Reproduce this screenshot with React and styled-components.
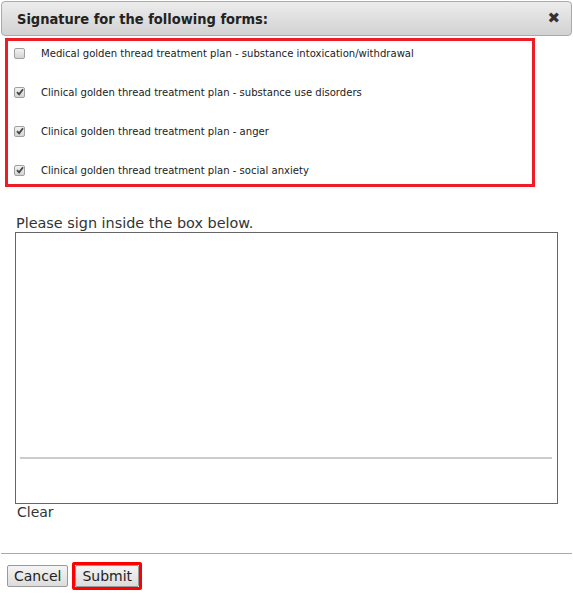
import styled, { createGlobalStyle } from "styled-components";

const GlobalStyle = createGlobalStyle`
  body {
    margin: 0;
    background: #fff;
    font-family: "DejaVu Sans", Verdana, sans-serif;
    color: #222;
  }
`;

const Dialog = styled.div`
  width: 573px;
  padding-top: 1px;
  box-sizing: border-box;
`;

const TitleBar = styled.div`
  box-sizing: border-box;
  margin: 0 1px;
  height: 35px;
  display: flex;
  align-items: center;
  justify-content: space-between;
  padding: 0 11px 0 15px;
  border: 1px solid #aaa;
  border-radius: 4px;
  background: linear-gradient(#ececec, #d2d2d2);
`;

const Title = styled.div`
  font-family: "DejaVu Sans Condensed", "DejaVu Sans", sans-serif;
  font-size: 14.5px;
  font-weight: bold;
  color: #222;
`;

const CloseButton = styled.span`
  font-size: 15px;
  font-weight: bold;
  color: #333;
  line-height: 1;
`;

const FormList = styled.div`
  box-sizing: border-box;
  margin: 2px 0 0 5px;
  width: 530px;
  height: 149px;
  border: 3px solid #ee1c24;
  padding: 2px 0 0 6px;
  display: flex;
  flex-direction: column;
  gap: 19px;
`;

const FormRow = styled.label`
  height: 20px;
  display: flex;
  align-items: center;
  font-family: "DejaVu Sans Condensed", "DejaVu Sans", sans-serif;
  font-size: 11.2px;
  color: #222;
`;

const Box = styled.span`
  box-sizing: border-box;
  width: 11px;
  height: 11px;
  margin-right: 16px;
  border: 1px solid #a0a0a0;
  border-radius: 2px;
  background: linear-gradient(#f2f2f2, #d4d4d4);
  display: flex;
  align-items: center;
  justify-content: center;
`;

const SignArea = styled.div`
  margin: 27px 0 0 15px;
`;

const Prompt = styled.div`
  font-size: 14.4px;
  color: #333;
  line-height: 18px;
  padding-left: 1px;
`;

const SignBox = styled.div`
  box-sizing: border-box;
  width: 543px;
  height: 272px;
  border: 1px solid #666;
  display: flex;
  flex-direction: column;
  justify-content: flex-end;
  padding: 0 5px 44px 4px;
`;

const SignLine = styled.div`
  height: 2px;
  background: #ccc;
`;

const ClearLink = styled.div`
  font-size: 14px;
  color: #333;
  padding-left: 2px;
  line-height: 17px;
`;

const Divider = styled.hr`
  margin: 32px 1px 0 1px;
  border: 0;
  border-top: 1px solid #aaa;
`;

const Actions = styled.div`
  display: flex;
  align-items: center;
  gap: 4px;
  padding: 8px 0 0 7px;
`;

const Button = styled.button`
  box-sizing: border-box;
  height: 22px;
  padding: 0 6px;
  font-family: "DejaVu Sans", Verdana, sans-serif;
  font-size: 14px;
  color: #222;
  border: 1px solid #999;
  border-radius: 2px;
  background: linear-gradient(#f5f5f5, #dcdcdc);
`;

const Highlight = styled.div`
  border: 3px solid #ff0000;
  border-radius: 2px;
  display: flex;
`;

const forms = [
  { name: "Medical golden thread treatment plan - substance intoxication/withdrawal", checked: false },
  { name: "Clinical golden thread treatment plan - substance use disorders", checked: true },
  { name: "Clinical golden thread treatment plan - anger", checked: true },
  { name: "Clinical golden thread treatment plan - social anxiety", checked: true },
];

function Check({ checked }) {
  return (
    <Box>
      {checked && (
        <svg width="8" height="8" viewBox="0 0 8 8">
          <path d="M1 4.2 L3.1 6.3 L7 1.3" fill="none" stroke="#444" strokeWidth="1.8" />
        </svg>
      )}
    </Box>
  );
}

export default function App() {
  return (
    <>
      <GlobalStyle />
      <Dialog>
        <TitleBar>
          <Title>Signature for the following forms:</Title>
          <CloseButton>✖</CloseButton>
        </TitleBar>
        <FormList>
          {forms.map((f, ix) => (
            <FormRow key={ix}>
              <Check checked={f.checked} />
              {f.name}
            </FormRow>
          ))}
        </FormList>
        <SignArea>
          <Prompt>Please sign inside the box below.</Prompt>
          <SignBox>
            <SignLine />
          </SignBox>
          <ClearLink>Clear</ClearLink>
        </SignArea>
        <Divider />
        <Actions>
          <Button>Cancel</Button>
          <Highlight>
            <Button>Submit</Button>
          </Highlight>
        </Actions>
      </Dialog>
    </>
  );
}
